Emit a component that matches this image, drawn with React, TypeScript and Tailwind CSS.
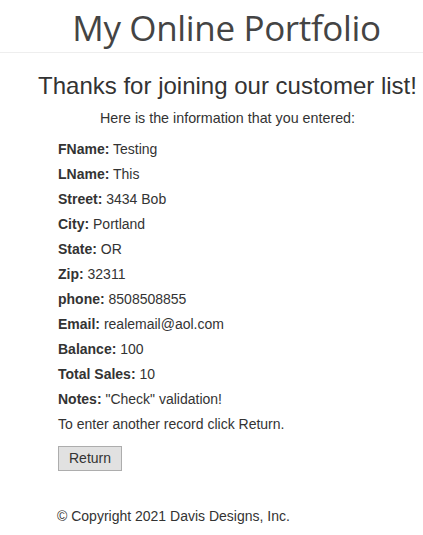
export default function App() {
  const rows: [string, string][] = [
    ["FName:", "Testing"],
    ["LName:", "This"],
    ["Street:", "3434 Bob"],
    ["City:", "Portland"],
    ["State:", "OR"],
    ["Zip:", "32311"],
    ["phone:", "8508508855"],
    ["Email:", "realemail@aol.com"],
    ["Balance:", "100"],
    ["Total Sales:", "10"],
    ["Notes:", "\"Check\" validation!"],
  ];
  return (
    <div className="w-[423px] min-h-[535px] bg-white text-[#333] text-[14px] font-['Liberation_Sans',Arial,sans-serif]">
      <header className="h-[53px] border-b border-[#eee] flex items-center justify-center">
        <h1 className="text-[35px] leading-none text-[#444] font-['Open_Sans',sans-serif] tracking-[-0.35px] ml-[30px] mt-[2px]">My Online Portfolio</h1>
      </header>
      <main className="ml-[32px]">
        <h2 className="text-[24px] leading-[28px] text-center mt-[19px]">Thanks for joining our customer list!</h2>
        <p className="text-center mt-[10px] leading-[16px] text-[14.3px]">Here is the information that you entered:</p>
        <div className="pl-[26px] mt-[15px] flex flex-col gap-[9px] leading-[16px]">
          {rows.map(([k, v]) => (
            <div key={k}>
              <b>{k}</b> {v}
            </div>
          ))}
          <div>To enter another record click Return.</div>
        </div>
        <div className="pl-[26px] mt-[14px]">
          <button className="h-[25px] px-[10px] bg-[#e1e1e1] border border-[#adadad] text-[14px] text-[#333]">Return</button>
        </div>
      </main>
      <footer className="pl-[57px] mt-[37px] leading-[16px]">© Copyright 2021 Davis Designs, Inc.</footer>
    </div>
  );
}
